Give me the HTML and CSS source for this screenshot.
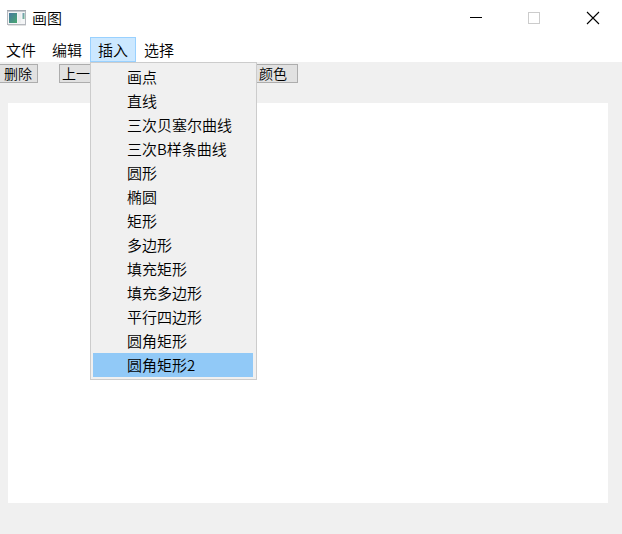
FILE: index.html
```html
<!DOCTYPE html>
<html lang="zh-CN">
<head>
<meta charset="utf-8">
<title>画图</title>
<link rel="stylesheet" href="styles.css">
</head>
<body>
<div class="window">
  <header class="titlebar">
    <svg class="app-icon" width="20" height="17" viewBox="0 0 20 17">
      <defs>
        <linearGradient id="pane" x1="0" y1="0" x2="1" y2="1">
          <stop offset="0" stop-color="#4878a0"/><stop offset="1" stop-color="#48a870"/>
        </linearGradient>
      </defs>
      <rect x="0.5" y="0.5" width="18" height="14" fill="#f4f5f6" stroke="#b4b8be"/>
      <path d="M0 0.5h19" stroke="#a0a4ac"/>
      <path d="M1 1.5h17" stroke="#c4c8ce"/>
      <path d="M1 15.5h18" stroke="#e2e2e2"/>
      <rect x="2" y="3" width="8" height="10" fill="url(#pane)"/>
      <rect x="11" y="3" width="3" height="10" fill="#eceeef"/>
      <rect x="15.5" y="3" width="2" height="6" fill="url(#pane)" opacity=".75"/>
    </svg>
    <span class="title">画图</span>
    <div class="controls">
      <svg width="58" height="36" viewBox="0 0 58 36"><path d="M23 17.5h12" stroke="#000"/></svg>
      <svg width="58" height="36" viewBox="0 0 58 36"><rect x="23.5" y="12.5" width="11" height="11" fill="none" stroke="#ccc"/></svg>
      <svg width="58" height="36" viewBox="0 0 58 36"><path d="M24 12l12 12M36 12l-12 12" stroke="#000" stroke-width="1.1"/></svg>
    </div>
  </header>
  <nav class="menubar">
    <div class="menu">文件</div>
    <div class="menu">编辑</div>
    <div class="menu open">插入
      <ul class="dropdown">
        <li>画点</li>
        <li>直线</li>
        <li>三次贝塞尔曲线</li>
        <li>三次B样条曲线</li>
        <li>圆形</li>
        <li>椭圆</li>
        <li>矩形</li>
        <li>多边形</li>
        <li>填充矩形</li>
        <li>填充多边形</li>
        <li>平行四边形</li>
        <li>圆角矩形</li>
        <li class="selected">圆角矩形2</li>
      </ul>
    </div>
    <div class="menu">选择</div>
  </nav>
  <main class="workspace">
    <div class="toolbar">
      <button class="tool delete">删除</button>
      <button class="tool previous">上一</button>
      <button class="tool color">颜色</button>
    </div>
    <div class="canvas"></div>
  </main>
</div>
</body>
</html>
```
FILE: styles.css
```css
* { box-sizing: border-box; }

body {
  margin: 0;
  overflow: hidden;
  background: #fff;
  color: #000;
  font: 350 15px/24px "Noto Sans CJK SC", sans-serif;
}

.window {
  display: flex;
  flex-direction: column;
  width: 622px;
  height: 534px;
}

.titlebar {
  display: flex;
  flex: 0 0 37px;
  align-items: flex-start;
  padding: 0 1px 0 7px;
}

.app-icon { margin-top: 10px; }
.title { margin: 6px 0 0 5px; }

.controls {
  display: flex;
  margin-left: auto;
}

.controls svg { display: block; }

.menubar {
  display: flex;
  flex: 0 0 25px;
}

.menu {
  position: relative;
  width: 46px;
  height: 25px;
  padding-left: 8px;
  line-height: 26px;
  white-space: nowrap;
}

.menu:first-child {
  width: 44px;
  padding-left: 6px;
}

.open {
  background: #cce8ff;
  box-shadow: inset 0 0 0 1px #99d1ff;
}

.dropdown {
  position: absolute;
  z-index: 1;
  top: 25px;
  left: 0;
  width: 167px;
  height: 318px;
  margin: 0;
  padding: 2px 3px 2px 2px;
  border: 1px solid #ccc;
  background: #f0f0f0;
  line-height: 24px;
  list-style: none;
}

.dropdown li {
  height: 24px;
  padding-left: 34px;
}

.dropdown .selected { background: #91c9f7; }

.workspace {
  flex: 1;
  background: #f0f0f0;
}

.toolbar {
  display: flex;
  height: 41px;
  padding-top: 2px;
}

.tool {
  height: 19px;
  padding: 0 0 0 2px;
  border: 1px solid #adadad;
  background: #e1e1e1;
  color: #000;
  font: 350 14px/17px "Noto Sans CJK SC", sans-serif;
  text-align: left;
  white-space: nowrap;
}

.delete {
  width: 38px;
  padding-left: 4px;
  border-left: 0;
}

.previous {
  width: 60px;
  margin-left: 21px;
}

.color {
  width: 60px;
  margin-left: 119px;
  padding-left: 20px;
}

.canvas {
  width: 600px;
  height: 400px;
  margin-left: 8px;
  background: #fff;
}
```
